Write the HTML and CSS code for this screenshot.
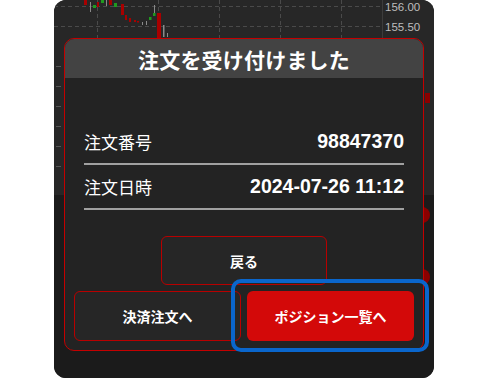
FILE: index.html
```html
<!DOCTYPE html>
<html lang="ja">
<head>
<meta charset="utf-8">
<link rel="stylesheet" href="styles.css">
</head>
<body>
<div class="phone">
  <svg class="chart" width="380" height="378" viewBox="0 0 380 378">
    <rect x="0" y="0" width="380" height="195" fill="#272727"/>
    <rect x="0" y="195" width="380" height="183" fill="#1b1b1b"/>
    <g stroke="#4a4a4a" stroke-width="1" stroke-dasharray="4 3">
      <line x1="0" y1="6.5" x2="328" y2="6.5"/>
      <line x1="0" y1="26.5" x2="328" y2="26.5"/>
      <line x1="43.5" y1="0" x2="43.5" y2="195"/>
      <line x1="104.5" y1="0" x2="104.5" y2="195"/>
      <line x1="165.5" y1="0" x2="165.5" y2="195"/>
      <line x1="226.5" y1="0" x2="226.5" y2="195"/>
      <line x1="287.5" y1="0" x2="287.5" y2="195"/>
    </g>
    <line x1="328.5" y1="0" x2="328.5" y2="195" stroke="#3c3c3c"/>
    <text x="331" y="11" class="price">156.00</text>
    <text x="331" y="31" class="price">155.50</text>
    <g fill="#555">
      <rect x="2" y="66" width="5" height="1"/>
      <rect x="2" y="86" width="5" height="1"/>
      <rect x="2" y="106" width="5" height="1"/>
      <rect x="2" y="126" width="5" height="1"/>
      <rect x="2" y="146" width="5" height="1"/>
      <rect x="2" y="166" width="5" height="1"/>
    </g>
    <g fill="#8a8a8a">
      <rect x="36" y="2" width="1" height="10"/>
      <rect x="52" y="0" width="1" height="6"/>
      <rect x="88" y="22" width="1" height="3"/>
      <rect x="92" y="21" width="1" height="4"/>
      <rect x="100" y="5" width="1" height="9"/>
      <rect x="109" y="25" width="1.5" height="12"/>
      <rect x="113" y="33" width="1" height="4"/>
    </g>
    <g fill="#a80000">
      <rect x="30" y="0" width="3" height="5"/>
      <rect x="43" y="2" width="2" height="5"/>
      <rect x="55" y="0" width="3" height="5"/>
      <rect x="67" y="4" width="3" height="11"/>
      <rect x="71" y="15" width="2" height="5"/>
      <rect x="75" y="18" width="2" height="4"/>
      <rect x="80" y="20" width="2" height="2"/>
      <rect x="83" y="21" width="2" height="1.5"/>
      <rect x="103" y="13" width="4" height="25"/>
    </g>
    <g fill="#1f9a1f">
      <rect x="39" y="5" width="3" height="3"/>
      <rect x="47" y="0" width="3" height="3"/>
      <rect x="60" y="3" width="3" height="4"/>
      <rect x="95" y="17" width="2.5" height="3"/>
      <rect x="99" y="13" width="2.5" height="3"/>
    </g>
    <rect x="371" y="93" width="5" height="10" fill="#8a0000"/>
    <circle cx="368" cy="215" r="8" fill="#8a0000"/>
    <circle cx="368" cy="277" r="8" fill="#8a0000"/>
  </svg>

  <div class="modal">
    <div class="modal-header">注文を受け付けました</div>
    <div class="modal-body">
      <div class="row">
        <span class="label">注文番号</span>
        <span class="value">98847370</span>
      </div>
      <div class="row">
        <span class="label">注文日時</span>
        <span class="value">2024-07-26 11:12</span>
      </div>
    </div>
    <div class="back-wrap">
      <button class="btn btn-outline btn-back">戻る</button>
    </div>
    <div class="actions">
      <button class="btn btn-outline">決済注文へ</button>
      <button class="btn btn-primary">ポジション一覧へ</button>
    </div>
  </div>

  <div class="highlight"></div>
</div>
</body>
</html>
```

FILE: styles.css
```css
* { box-sizing: border-box; }

html, body {
  margin: 0;
  padding: 0;
  background: #ffffff;
}

body {
  width: 488px;
  height: 380px;
  overflow: hidden;
  font-family: "Noto Sans CJK JP", "Noto Sans", sans-serif;
}

.phone {
  position: relative;
  margin-left: 54px;
  width: 380px;
  height: 378px;
  border-radius: 12px;
  overflow: hidden;
  background: #1b1b1b;
}

.chart {
  display: block;
}

.price {
  font-family: "Liberation Sans", Arial, sans-serif;
  font-size: 11.5px;
  fill: #bdbdbd;
}

.modal {
  position: absolute;
  left: 10px;
  top: 38px;
  width: 360px;
  height: 313px;
  border: 1px solid #c40000;
  border-radius: 10px;
  overflow: hidden;
  background: #232323;
  display: flex;
  flex-direction: column;
}

.modal-header {
  height: 39px;
  background: #434343;
  color: #ffffff;
  font-weight: 700;
  font-size: 21px;
  display: flex;
  align-items: center;
  justify-content: center;
  letter-spacing: 0.2px;
}

.modal-body {
  padding: 42px 19px 0 19px;
}

.row {
  height: 45px;
  border-bottom: 2px solid #a0a0a0;
  display: flex;
  align-items: center;
  justify-content: space-between;
  color: #ffffff;
}

.label {
  font-size: 17px;
  font-weight: 400;
}

.value {
  font-family: "Liberation Sans", "Noto Sans CJK JP", sans-serif;
  font-weight: 700;
  font-size: 19.5px;
}

.back-wrap {
  margin-top: 26px;
  display: flex;
  justify-content: center;
}

.btn {
  font-family: "Noto Sans CJK JP", sans-serif;
  font-weight: 700;
  font-size: 14px;
  color: #ffffff;
  border-radius: 6px;
  display: flex;
  align-items: center;
  justify-content: center;
  padding: 0;
}

.btn-outline {
  background: #262626;
  border: 1.5px solid #b80000;
}

.btn-back {
  width: 166px;
  height: 49px;
}

.actions {
  margin-top: 6px;
  padding: 0 9px;
  display: flex;
  gap: 6px;
}

.actions .btn {
  width: 167px;
  height: 50px;
}

.btn-primary {
  background: #d30909;
  border: none;
}

.highlight {
  position: absolute;
  left: 177px;
  top: 279px;
  width: 198px;
  height: 73px;
  border: 4px solid #0a66cc;
  border-radius: 10px;
}
```
